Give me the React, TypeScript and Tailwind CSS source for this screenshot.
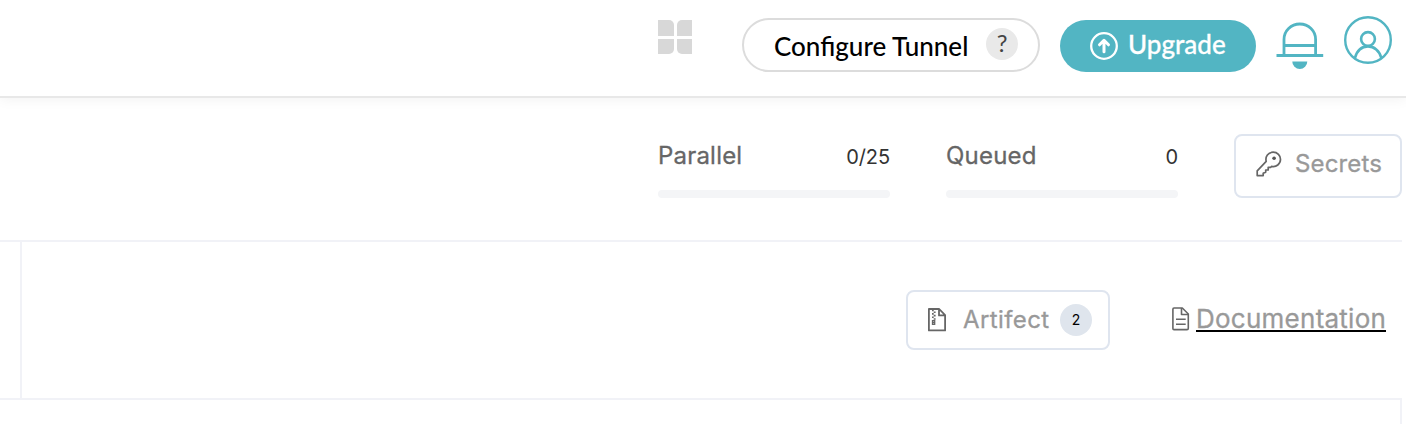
import React from "react";

function GridIcon() {
  return (
    <div className="grid h-[34px] w-[34px] grid-cols-2 gap-[3px]">
      <span className="rounded-tr-[5px] bg-[#d8d8d8]" />
      <span className="rounded-tl-[5px] bg-[#d8d8d8]" />
      <span className="rounded-br-[5px] bg-[#d8d8d8]" />
      <span className="rounded-bl-[5px] bg-[#d8d8d8]" />
    </div>
  );
}

function UpgradeIcon() {
  return (
    <svg width="28" height="28" viewBox="0 0 28 28" fill="none" stroke="#fff">
      <circle cx="14" cy="14" r="12.8" strokeWidth="2.3" />
      <path d="M14 19.7V9M9.5 12.8L14 8.3l4.5 4.5" strokeWidth="3" strokeLinecap="round" strokeLinejoin="round" />
    </svg>
  );
}

function BellIcon() {
  return (
    <svg width="48" height="50" viewBox="0 0 48 50" fill="none" stroke="#52b5c3" strokeWidth="2.8">
      <path d="M8 35V19.5C8 11 15 4 23.8 4S39.6 11 39.6 19.5V35" />
      <path d="M8 25.5H39.6M.5 35.5H47.2" />
      <path d="M16.3 41.5H31.3A7.5 7.6 0 0 1 16.3 41.5Z" fill="#52b5c3" stroke="none" />
    </svg>
  );
}

function UserIcon() {
  return (
    <svg width="48" height="48" viewBox="0 0 48 48" fill="none" stroke="#52b5c3" strokeWidth="2.4">
      <circle cx="24" cy="24" r="22.8" />
      <circle cx="24" cy="23" r="6.9" strokeWidth="2.6" />
      <path d="M11 42C13 34.5 18 30.4 24 30.4S35.5 34.5 37.3 42" strokeWidth="2.6" />
    </svg>
  );
}

function KeyIcon() {
  return (
    <svg width="26" height="26" viewBox="0 0 26 26" fill="none" stroke="#666" strokeWidth="1.7" strokeLinejoin="round">
      <path d="M10.2 10.3C9 5.5 12.2 1.2 17.1 1.2C21.5 1.2 24.5 4.4 24.5 8.2C24.5 13 20.2 16.4 15.7 15.3L14.8 16.3H12.2V19H9.7V21.1L7.2 22.2V24.6H1.2V19.8Z" />
      <circle cx="18.1" cy="7.3" r="1.8" fill="#555" stroke="none" />
    </svg>
  );
}

function ZipIcon() {
  return (
    <svg width="18" height="24" viewBox="0 0 18 24" fill="none" stroke="#666" strokeWidth="1.8">
      <path d="M.9 1H11.2L17.1 7.2V22.4H.9ZM11 1V7.4H17.1" strokeLinejoin="round" />
      <path d="M4 2.5H5.7M5.7 4.2H7.6M4 5.9H5.7M5.7 7.6H7.6M4 9.3H5.7M5.7 11H7.6" strokeWidth="1.6" />
      <path d="M4.5 12.6H6.7V16.4H4.5ZM4.5 14.5H6.7" strokeWidth="1.3" />
    </svg>
  );
}

function DocIcon() {
  return (
    <svg width="18" height="24" viewBox="0 0 18 24" fill="none" stroke="#666" strokeWidth="1.6" strokeLinejoin="round">
      <path d="M2 1H10.3L16.3 7V21.2Q16.3 22.6 15 22.6H2Q.9 22.6.9 21.4V2.2Q.9 1 2 1Z" />
      <path d="M9.5 1V7.5H16.3M4 12.2H13.7M4 17.2H13.7" />
    </svg>
  );
}

function Meter({ label, value }: { label: string; value: string }) {
  return (
    <div className="w-[232px] pt-[42px]">
      <div className="flex h-8 items-center justify-between">
        <span className="text-2xl leading-8 tracking-[0.2px] text-[#666] [-webkit-text-stroke:0.3px_#666]">{label}</span>
        <span className="pt-[2px] text-xl leading-8 tracking-[-0.1px] text-[#333]">{value}</span>
      </div>
      <div className="mt-[18px] h-2 rounded-full bg-[#f4f5f7]" />
    </div>
  );
}

export default function App() {
  return (
    <div className="flex h-[424px] w-[1406px] flex-col overflow-hidden bg-white font-[Inter,sans-serif]">
      <header className="z-10 flex h-[98px] shrink-0 items-start border-b-2 border-[#e8e8e8] bg-white pl-[658px] font-[Lato,sans-serif] shadow-[0_2px_12px_rgba(0,0,0,0.05)]">
        <div className="pt-5">
          <GridIcon />
        </div>
        <button className="mt-[18px] ml-[50px] flex h-[54px] w-[298px] items-center rounded-full border-2 border-[#dcdcdc] pl-[30px] text-[26px] text-black">
          <span className="w-[212px] pt-[1px] text-left leading-8 font-medium whitespace-nowrap">Configure Tunnel</span>
          <span className="mb-[2px] flex h-8 w-8 items-center justify-center rounded-full bg-[#e9e9e9] pb-[2px] text-2xl text-[#444]">?</span>
        </button>
        <button className="mt-5 ml-5 flex h-[52px] w-[196px] items-center rounded-full bg-[#52b5c3] pl-[30px] text-[26px] text-white">
          <UpgradeIcon />
          <span className="pb-1 pl-[10px] leading-8 font-medium [-webkit-text-stroke:0.3px_#fff]">Upgrade</span>
        </button>
        <div className="pt-5 pl-5">
          <BellIcon />
        </div>
        <div className="pt-4 pl-5">
          <UserIcon />
        </div>
      </header>

      <section className="mr-1 flex h-36 shrink-0 items-start gap-14 border-b-2 border-[#f1f2f7] pl-[658px]">
        <Meter label="Parallel" value="0/25" />
        <Meter label="Queued" value="0" />
        <button className="mt-9 flex h-16 w-[168px] items-center rounded-lg border-2 border-[#dfe5ef] pb-1 pl-5">
          <KeyIcon />
          <span className="pl-[13px] text-2xl tracking-[0.15px] text-[#999] [-webkit-text-stroke:0.3px_#999]">Secrets</span>
        </button>
      </section>

      <section className="mr-1 flex h-[158px] shrink-0 border-b-2 border-[#f1f2f7]">
        <div className="w-[22px] shrink-0 border-r-2 border-[#f1f2f7]" />
        <div className="flex items-start pt-12 pl-[884px]">
          <button className="flex h-[60px] w-[204px] items-center rounded-lg border-2 border-[#dfe5ef] pl-5">
            <ZipIcon />
            <span className="w-[114px] pl-[17px] text-left text-2xl tracking-[0.4px] text-[#999] [-webkit-text-stroke:0.3px_#999]">Artifect</span>
            <span className="flex h-8 w-8 shrink-0 items-center justify-center rounded-full bg-[#dfe5ed] text-sm text-black">2</span>
          </button>
          <a className="flex pt-[17px] pl-[62px]">
            <DocIcon />
            <span className="ml-[6px] h-[25px] w-[190px] border-b-2 border-black text-[26px] leading-[23px] tracking-[0.25px] text-[#999] [-webkit-text-stroke:0.3px_#999]">Documentation</span>
          </a>
        </div>
      </section>
      <div className="mr-1 flex-1 border-r-2 border-[#f1f2f7]" />
    </div>
  );
}
